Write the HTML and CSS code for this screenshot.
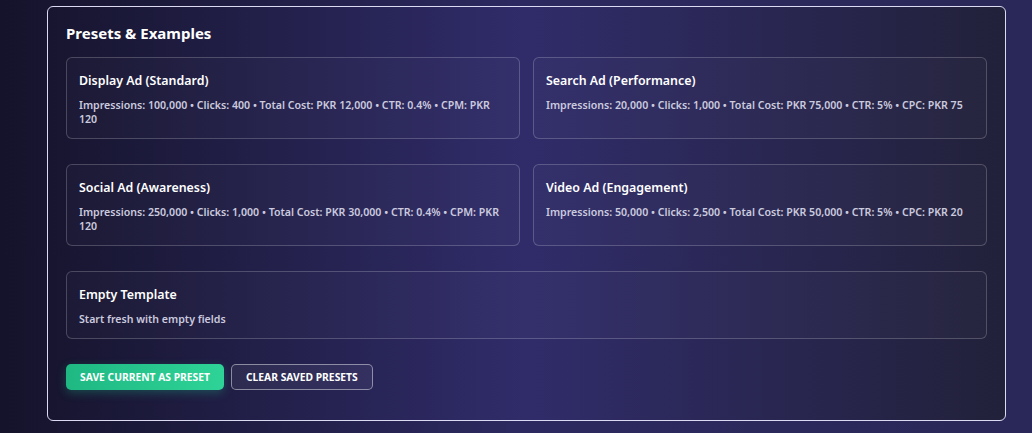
FILE: index.html
```html
<!DOCTYPE html>
<html lang="en">
<head>
    <meta charset="UTF-8">
    <meta name="viewport" content="width=device-width, initial-scale=1.0">
    <title>Presets &amp; Examples</title>
    <link rel="stylesheet" href="styles.css">
</head>
<body>
    <div class="panel">
        <h2>Presets &amp; Examples</h2>

        <div class="preset-grid">
            <div class="preset">
                <h3>Display Ad (Standard)</h3>
                <p>Impressions: 100,000 • Clicks: 400 • Total Cost: PKR 12,000 • CTR: 0.4% • CPM: PKR 120</p>
            </div>
            <div class="preset">
                <h3>Search Ad (Performance)</h3>
                <p>Impressions: 20,000 • Clicks: 1,000 • Total Cost: PKR 75,000 • CTR: 5% • CPC: PKR 75</p>
            </div>
            <div class="preset">
                <h3>Social Ad (Awareness)</h3>
                <p>Impressions: 250,000 • Clicks: 1,000 • Total Cost: PKR 30,000 • CTR: 0.4% • CPM: PKR 120</p>
            </div>
            <div class="preset">
                <h3>Video Ad (Engagement)</h3>
                <p>Impressions: 50,000 • Clicks: 2,500 • Total Cost: PKR 50,000 • CTR: 5% • CPC: PKR 20</p>
            </div>
            <div class="preset wide">
                <h3>Empty Template</h3>
                <p>Start fresh with empty fields</p>
            </div>
        </div>

        <div class="actions">
            <button class="btn btn-primary">Save current as preset</button>
            <button class="btn btn-outline">Clear saved presets</button>
        </div>
    </div>
</body>
</html>
```

FILE: styles.css
```css
* {
    margin: 0;
    padding: 0;
    box-sizing: border-box;
}

body {
    font-family: "Noto Sans", "Open Sans", Arial, sans-serif;
    background: linear-gradient(90deg, #15132b 0%, #2c2960 50%, #2a2858 100%);
    color: #ffffff;
    height: 433px;
    overflow: hidden;
    padding: 6px 26px 0 47px;
}

/* Panel */
.panel {
    background: linear-gradient(90deg, #17152f 0%, #302c6a 50%, #22213a 100%);
    border: 1px solid #dcdaf2;
    border-radius: 6px;
    padding: 15px 18px 30px;
}

.panel h2 {
    font-size: 15px;
    font-weight: 700;
    line-height: 22px;
    margin-bottom: 13px;
}

/* Preset cards */
.preset-grid {
    display: grid;
    grid-template-columns: 1fr 1fr;
    column-gap: 13px;
    row-gap: 25px;
}

.preset {
    border: 1px solid rgba(255, 255, 255, 0.2);
    border-radius: 6px;
    background: rgba(255, 255, 255, 0.02);
    padding: 14px 12px 12px;
}

.preset.wide {
    grid-column: 1 / -1;
}

.preset h3 {
    font-size: 12.4px;
    font-weight: 600;
    line-height: 18px;
    margin-bottom: 8px;
}

.preset p {
    font-size: 10.6px;
    font-weight: 600;
    line-height: 14px;
    color: #cbcadf;
}

/* Buttons */
.actions {
    display: flex;
    gap: 7px;
    margin-top: 25px;
}

.btn {
    font-family: inherit;
    font-size: 10.3px;
    font-weight: 700;
    text-transform: uppercase;
    color: #ffffff;
    height: 26px;
    padding: 0 14px;
    border-radius: 5px;
    cursor: pointer;
}

.btn-primary {
    background: linear-gradient(90deg, #1fb883, #2ed397);
    border: none;
    box-shadow: 0 3px 10px rgba(31, 184, 131, 0.3);
}

.btn-outline {
    background: rgba(255, 255, 255, 0.06);
    border: 1px solid rgba(255, 255, 255, 0.45);
}
```
